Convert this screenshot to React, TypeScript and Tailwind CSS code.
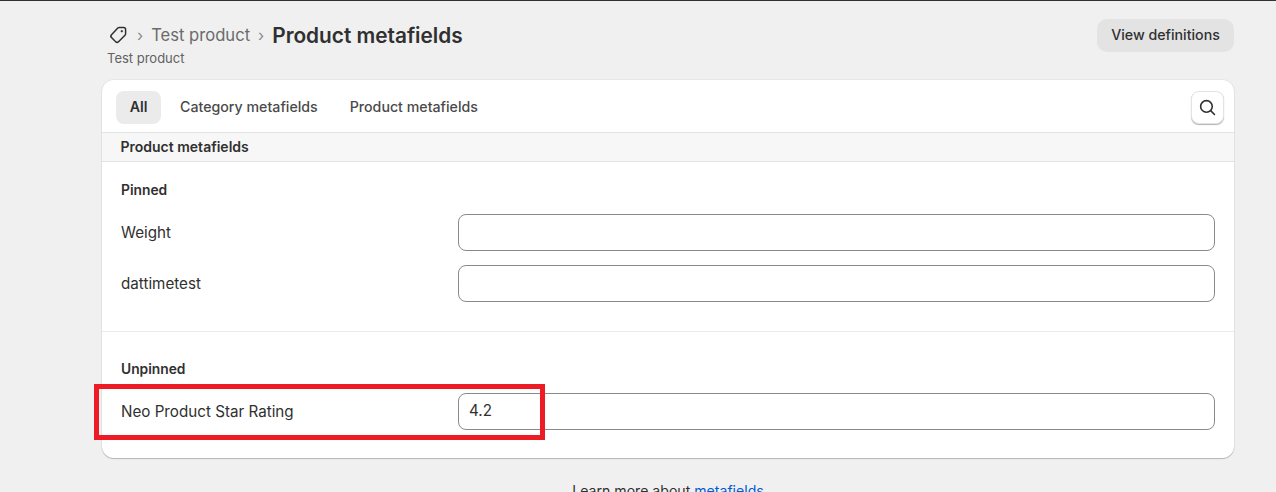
export default function App() {
  const Field = ({ label, value = "" }: { label: string; value?: string }) => (
    <div className="flex items-start h-[37px]">
      <div className="w-[337px] shrink-0 text-[15.2px] leading-[36px] translate-y-[0.5px] text-[#303030]">{label}</div>
      <div className="flex-1 h-[37px] border border-[#8a8a8a] rounded-[8px] bg-white px-[10px] flex items-center text-[15.2px] text-[#303030]">{value}</div>
    </div>
  );
  return (
    <div className="relative h-[492px] w-[1276px] overflow-hidden bg-[#f0f0f0] font-['Inter',sans-serif]">
      <div className="h-px bg-[#303030]" />
      <div className="ml-[102px] w-[1132px]">
        <div className="flex justify-between pt-[18px] h-[79px]">
          <div className="pl-[5px]">
            <div className="flex items-center h-[32px] pl-[1px]">
              <svg width="20" height="20" viewBox="0 0 20 20" fill="none" stroke="#303030" strokeWidth="1.5" strokeLinejoin="round" className="shrink-0">
                <path d="M11.2 2.4h4.4a2 2 0 0 1 2 2v4.4a2 2 0 0 1-.6 1.4l-6.5 6.5a2 2 0 0 1-2.8 0l-4.2-4.2a2 2 0 0 1 0-2.8l6.3-6.7a2 2 0 0 1 1.4-.6Z" />
                <circle cx="13.8" cy="6.2" r="0.8" fill="#303030" strokeWidth="0.8" />
              </svg>
              <span className="ml-[9px] text-[#8a8a8a] text-[16px]">›</span>
              <span className="ml-[8px] text-[16.6px] text-[#6b6b6b]">Test product</span>
              <span className="ml-[8px] text-[#8a8a8a] text-[16px]">›</span>
              <span className="ml-[8px] text-[20.8px] font-semibold text-[#303030] translate-y-[1px]">Product metafields</span>
            </div>
            <div className="text-[13px] leading-[16px] -mt-[1px] text-[#616161]">Test product</div>
          </div>
          <button className="h-[33px] w-[137px] rounded-[10px] bg-[#e3e3e3] text-[14.2px] leading-[30px] pb-[2px] font-medium text-[#303030]">View definitions</button>
        </div>
        <div className="h-[378px] rounded-[12px] bg-white overflow-hidden shadow-[0_1px_1px_rgba(0,0,0,0.22),0_0_0_1px_rgba(0,0,0,0.04)]">
          <div className="h-[52px] flex items-center justify-between pl-[14px] pr-[10px] pt-[2px]">
            <div className="flex items-center text-[14.2px] leading-[20px] font-medium text-[#4a4a4a]">
              <div className="h-[33px] w-[45px] rounded-[8px] bg-[#ebebeb] flex items-center justify-center pb-[1px] font-semibold text-[#303030]">All</div>
              <div className="ml-[19px]">Category metafields</div>
              <div className="ml-[32px]">Product metafields</div>
            </div>
            <div className="h-[33px] w-[33px] rounded-[8px] bg-white border border-[#e3e3e3] shadow-[0_1px_1px_rgba(0,0,0,0.3)] flex items-center justify-center">
              <svg width="19" height="19" viewBox="0 0 18 18" fill="none" stroke="#303030" strokeWidth="1.5" strokeLinecap="round">
                <circle cx="8" cy="8" r="5.5" />
                <path d="M12 12l3.6 3.6" />
              </svg>
            </div>
          </div>
          <div className="h-[30px] bg-[#f7f7f7] border-y border-[#e3e3e3] pl-[18.5px] pb-[2px] flex items-center text-[14px] font-semibold text-[#303030]">Product metafields</div>
          <div className="px-[19px]">
            <div className="pt-[20px] text-[13.8px] leading-[17px] font-semibold text-[#303030]">Pinned</div>
            <div className="mt-[15px] flex flex-col gap-[14px]">
              <Field label="Weight" />
              <Field label="dattimetest" />
            </div>
          </div>
          <div className="mt-[29px] h-px bg-[#ebebeb]" />
          <div className="px-[19px]">
            <div className="pt-[29px] text-[13.8px] leading-[17px] font-semibold text-[#303030]">Unpinned</div>
            <div className="mt-[15px]">
              <Field label="Neo Product Star Rating" value="4.2" />
            </div>
          </div>
        </div>
        <div className="mt-[22px] text-center text-[14.1px] text-[#303030]">
          Learn more about <span className="text-[#005bd3]">metafields</span>
        </div>
      </div>
      <div className="absolute left-[94px] top-[384px] w-[451px] h-[56px] border-[5px] border-[#ed1c24]" />
    </div>
  );
}
